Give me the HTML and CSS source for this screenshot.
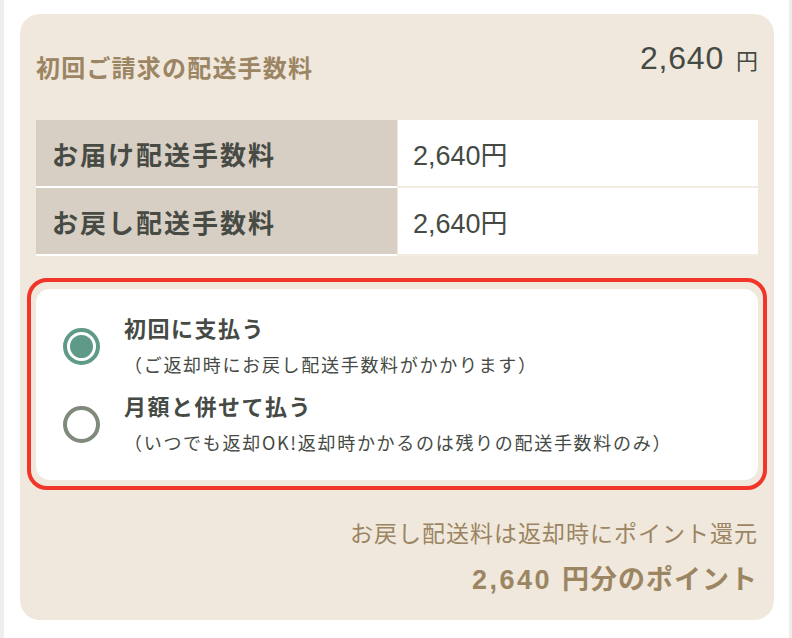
FILE: index.html
```html
<!DOCTYPE html>
<html lang="ja">
<head>
<meta charset="utf-8">
<title>配送手数料</title>
<link rel="stylesheet" href="styles.css">
</head>
<body>
<div class="page">
  <section class="card">
    <div class="card-head">
      <h2 class="head-label">初回ご請求の配送手数料</h2>
      <div class="head-amount"><span class="num">2,640</span><span class="yen">円</span></div>
    </div>
    <div class="fee-table">
      <div class="fee-label">お届け配送手数料</div>
      <div class="fee-value">2,640円</div>
      <div class="fee-label">お戻し配送手数料</div>
      <div class="fee-value">2,640円</div>
    </div>
    <div class="highlight">
      <div class="options">
        <label class="option">
          <span class="radio checked"></span>
          <span class="option-text">
            <span class="option-title">初回に支払う</span>
            <span class="option-sub">（ご返却時にお戻し配送手数料がかかります）</span>
          </span>
        </label>
        <label class="option">
          <span class="radio"></span>
          <span class="option-text">
            <span class="option-title">月額と併せて払う</span>
            <span class="option-sub">（いつでも返却OK!返却時かかるのは残りの配送手数料のみ）</span>
          </span>
        </label>
      </div>
    </div>
    <p class="note">お戻し配送料は返却時にポイント還元</p>
    <p class="points"><span class="pnum">2,640</span>円分のポイント</p>
  </section>
</div>
</body>
</html>
```
FILE: styles.css
```css
html {
  background: #eeeeee;
}
body {
  margin: 0 3px 0 4px;
  background: #ffffff;
  min-height: 638px;
  font-family: "Noto Sans CJK JP", "Liberation Sans", sans-serif;
}
.page {
  padding: 14px 15px 18px 16px;
}
.card {
  background: #f0e8dc;
  border-radius: 20px;
  height: 606px;
  box-sizing: border-box;
  padding: 0 16px;
  display: flex;
  flex-direction: column;
}
.card-head {
  height: 106px;
  display: flex;
  justify-content: space-between;
  align-items: flex-start;
}
.head-label {
  margin: 41px 0 0;
  font-size: 24px;
  line-height: 24px;
  font-weight: 700;
  letter-spacing: 1.2px;
  color: #9b8563;
}
.head-amount {
  margin-top: 28px;
  color: #454a44;
  display: flex;
  align-items: baseline;
  gap: 12px;
}
.head-amount .num {
  font-family: "Liberation Sans", sans-serif;
  font-size: 32px;
  line-height: 32px;
  letter-spacing: 0.8px;
}
.head-amount .yen {
  font-size: 22px;
  line-height: 24px;
}
.fee-table {
  display: grid;
  grid-template-columns: 361px 1fr;
}
.fee-label {
  height: 66px;
  border-bottom: 2px solid #ffffff;
  background: #d8cfc4;
  color: #474b44;
  font-size: 26px;
  font-weight: 700;
  letter-spacing: 2px;
  padding-left: 16px;
  display: flex;
  align-items: center;
}
.fee-value {
  height: 66px;
  border-bottom: 2px solid #f3ece2;
  margin-left: 1px;
  background: #ffffff;
  color: #454a44;
  font-family: "Liberation Sans", "Noto Sans CJK JP", sans-serif;
  font-size: 27px;
  padding-left: 15px;
  display: flex;
  align-items: center;
}
.highlight {
  margin: 22px -9px 0 -9px;
  border: 4px solid #f2352a;
  border-radius: 20px;
  padding: 7px 5px 6px;
}
.options {
  background: #ffffff;
  border-radius: 14px;
  padding: 20px 0 19px 27px;
  display: flex;
  flex-direction: column;
  gap: 4px;
}
.option {
  display: flex;
  align-items: center;
}
.radio {
  width: 37px;
  height: 37px;
  box-sizing: border-box;
  border-radius: 50%;
  border: 4px solid #7f897c;
  flex: none;
  margin-right: 24px;
  display: flex;
  align-items: center;
  justify-content: center;
}
.radio.checked {
  border-color: #5e9a87;
}
.radio.checked::after {
  content: "";
  width: 23px;
  height: 23px;
  border-radius: 50%;
  background: #5e9a87;
}
.option-text {
  display: flex;
  flex-direction: column;
  color: #454a44;
}
.option-title {
  font-size: 22px;
  line-height: 36px;
  font-weight: 700;
  letter-spacing: 1.5px;
}
.option-sub {
  font-size: 18px;
  line-height: 38px;
  letter-spacing: 1.7px;
}
.note {
  margin: 27px 0 0;
  text-align: right;
  color: #9b8563;
  font-size: 23px;
  line-height: 30px;
  letter-spacing: 1px;
}
.points {
  margin: 15px 0 0;
  text-align: right;
  color: #9b8563;
  font-size: 27px;
  line-height: 32px;
  font-weight: 700;
  letter-spacing: 1px;
}
.points .pnum {
  font-family: "Liberation Sans", sans-serif;
  letter-spacing: 2.5px;
  margin-right: 10px;
}
```
